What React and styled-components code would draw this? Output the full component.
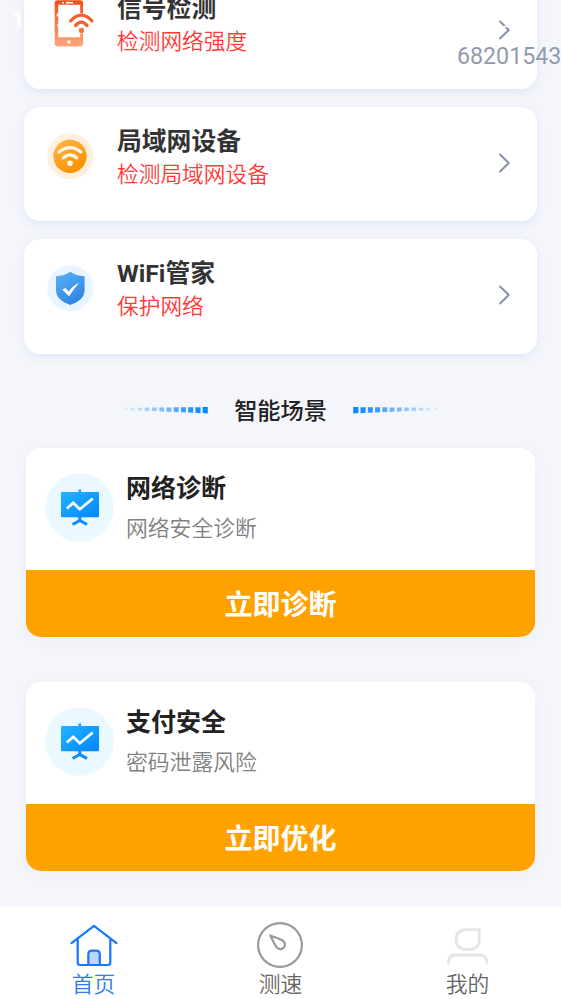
import React from "react";
import styled, { createGlobalStyle } from "styled-components";

const GlobalStyle = createGlobalStyle`
  * { box-sizing: border-box; }
  html, body { margin: 0; height: 999px; overflow: hidden; background: #f5f6fb; }
  body { font-family: Roboto, "Noto Sans CJK SC", sans-serif; }
  svg { display: block; flex: none; }
`;

const Screen = styled.div`
  position: relative;
  width: 561px;
  height: 999px;
  overflow: hidden;
  display: flex;
  flex-direction: column;
  background: #f5f6fb;
`;

const Content = styled.main`
  flex: 1;
  min-height: 0;
  overflow: hidden;
  display: flex;
  flex-direction: column;
  justify-content: flex-end;
  padding-bottom: 36px;
`;

const ToolList = styled.section`
  display: flex;
  flex-direction: column;
  gap: 18px;
  padding: 0 24.5px 0 24px;
`;

const ToolCard = styled.article`
  display: flex;
  align-items: flex-start;
  height: 114.7px;
  padding: 18px 25.5px 0 22.5px;
  border-radius: 16px;
  background: #fff;
  box-shadow: 0 3px 9px rgba(188, 209, 245, 0.42);
`;

const ToolIcon = styled.div`
  width: 70.5px;
  padding-top: 8px;
`;

const ToolText = styled.div`
  flex: 1;
`;

const ToolTitle = styled.h2`
  margin: 0;
  font-size: 24.8px;
  line-height: 34px;
  font-weight: 700;
  color: #333;
`;

const ToolNote = styled.p`
  margin: 0;
  font-size: 21.7px;
  line-height: 32.4px;
  font-weight: 350;
  color: #ff3a36;
`;

const Chevron = styled.svg`
  margin-top: 28px;
`;

const SectionHead = styled.header`
  display: flex;
  align-items: center;
  justify-content: center;
  gap: 26px;
  height: 40px;
  margin: 37px 0 17px;
`;

const SectionTitle = styled.h3`
  margin: 0;
  font-size: 23.2px;
  line-height: 40px;
  font-weight: 500;
  color: #222;
`;

const SceneList = styled.section`
  display: flex;
  flex-direction: column;
  gap: 45px;
  padding: 0 26px;
`;

const SceneCard = styled.article`
  height: 189px;
  border-radius: 15px;
  overflow: hidden;
  background: #fff;
  box-shadow: 0 3px 16px rgba(60, 60, 90, 0.045);
`;

const SceneInfo = styled.div`
  display: flex;
  height: 122px;
  gap: 12px;
  padding: 25px 19px 0;
`;

const SceneTitle = styled.h4`
  margin: -3px 0 4px;
  font-size: 25px;
  line-height: 37px;
  font-weight: 700;
  color: #222;
`;

const SceneNote = styled.p`
  margin: 0;
  font-size: 21.8px;
  line-height: 36px;
  font-weight: 350;
  color: #808080;
`;

const SceneButton = styled.button`
  display: block;
  width: 100%;
  height: 67px;
  padding: 5px 0 0;
  border: 0;
  background: #ffa200;
  color: #fff;
  font: 700 28px/62px Roboto, "Noto Sans CJK SC", sans-serif;
`;

const TabBar = styled.nav`
  display: grid;
  grid-template-columns: repeat(3, 1fr);
  height: 92px;
  background: #fff;
`;

const Tab = styled.a`
  display: flex;
  flex-direction: column;
  align-items: center;
  padding-top: 14px;
  font-size: 21.8px;
  line-height: 36px;
  font-weight: 350;
  color: ${(p) => (p.$active ? "#3478f6" : "#666")};
`;

const Watermark = styled.span`
  position: absolute;
  left: 457px;
  top: 40px;
  font-size: 23.2px;
  line-height: 32px;
  color: #929bad;
`;

const Clock = styled.span`
  position: absolute;
  left: 12px;
  top: 5px;
  font-size: 22px;
  line-height: 30px;
  font-weight: 500;
  color: #fff;
`;

const PhoneSignalIcon = () => (
  <svg width="48" height="48" viewBox="0 0 48 48">
    <defs>
      <linearGradient id="phone" x1="0" y1="0" x2="0" y2="1">
        <stop offset="0" stopColor="#f24a18" />
        <stop offset="1" stopColor="#ffa67d" />
      </linearGradient>
    </defs>
    <path
      fill="url(#phone)"
      fillRule="evenodd"
      d="M10.5 .2H33.5Q36 .2 36 3V43.5Q36 46.5 33 46.5H10.5Q7.7 46.5 7.7 43.5V3Q7.7 .2 10.5 .2ZM11.2 4.8V37.2H33.2V4.8Z"
    />
    <path d="M15 2.7H17M18.8 2.7H26" stroke="#fff" strokeWidth="1.5" />
    <rect x="20.4" y="40.5" width="3" height="3" fill="#fff" />
    <rect x="32.8" y="13.5" width="4.5" height="20" fill="#fff" />
    <path d="M9.8 13.5h2v3h-2zM10.3 24h1.5v2.4h-1.5z" fill="#fff" />
    <g fill="none" stroke="#f4602d" strokeWidth="3.3" strokeLinecap="round">
      <path d="M23.7 20.8Q34.3 9.6 44.9 20.8" />
      <path d="M28.6 25.6Q34.3 18.8 40.1 25.6" />
    </g>
    <circle cx="34.4" cy="30.4" r="2.7" fill="#f9743f" />
  </svg>
);

const LanIcon = () => (
  <svg width="47" height="47" viewBox="0 0 47 47">
    <defs>
      <linearGradient id="lan" x1="0" y1="0" x2=".6" y2="1">
        <stop offset="0" stopColor="#ffb84a" />
        <stop offset="1" stopColor="#fb9100" />
      </linearGradient>
    </defs>
    <circle cx="23.3" cy="23.3" r="23" fill="#ffefdc" />
    <circle cx="23" cy="23.3" r="16.6" fill="url(#lan)" />
    <g fill="none" stroke="#fff8ec" strokeWidth="3.2" strokeLinecap="round">
      <path d="M12 19Q23 10.2 34 19" />
      <path d="M16.3 24.8Q23 18.8 29.7 24.8" />
    </g>
    <circle cx="23" cy="30.2" r="2.8" fill="#fff8ec" />
  </svg>
);

const ShieldIcon = () => (
  <svg width="47" height="47" viewBox="0 0 47 47">
    <defs>
      <linearGradient id="shield" x1="0" y1="0" x2=".5" y2="1">
        <stop offset="0" stopColor="#5ab2fb" />
        <stop offset="1" stopColor="#3186df" />
      </linearGradient>
    </defs>
    <circle cx="23.3" cy="23.2" r="23" fill="#e8f4ff" />
    <path
      d="M23.3 6.8Q29 11 37.6 11.2V25Q37.6 35 23.3 39.9Q9 35 9 25V11.2Q17.6 11 23.3 6.8Z"
      fill="url(#shield)"
    />
    <path d="M15.3 24.8 18.4 23 21.8 26.5Q26 20.3 32.2 17.8Q27 23.5 22 31.3Z" fill="#fff" />
  </svg>
);

const BoardIcon = () => (
  <svg width="69" height="69" viewBox="0 0 69 69">
    <defs>
      <linearGradient id="board" x1="0" y1="0" x2="1" y2="1">
        <stop offset="0" stopColor="#20b5ff" />
        <stop offset="1" stopColor="#0584ff" />
      </linearGradient>
    </defs>
    <circle cx="34.5" cy="34.5" r="34.3" fill="#e9f9ff" />
    <path d="M34.8 16.5V20" stroke="#159cff" strokeWidth="2.6" />
    <rect x="16" y="19" width="38" height="25.3" rx="1" fill="url(#board)" />
    <path d="M34.8 44V47.5M27.6 51.5 34.8 47.4 42 51.5" fill="none" stroke="#0b8bff" strokeWidth="3" />
    <path d="M21.8 35.5 28.2 29.9 34.8 36.3 47.8 25.5" fill="none" stroke="#fff" strokeWidth="2.7" />
  </svg>
);

const trailOpacity = [0.1, 0.18, 0.26, 0.35, 0.43, 0.52, 0.6, 0.7, 0.8, 0.88, 0.96, 1];

const DotTrail = ({ flip }) => (
  <svg width="86" height="8" viewBox="0 0 86 8">
    <g transform={flip ? "translate(86 0) scale(-1 1)" : undefined}>
      {trailOpacity.map((opacity, i) => {
        const w = 4.3 + i * 0.08;
        const h = 2.4 + i * 0.36;
        const x = i * 7.22 + 1.2;
        const y = 0.1 + (11 - i) * 0.06;
        return (
          <path
            key={i}
            d={`M${x} ${y}h${w}v${h}l${-w} -.4z`}
            fill="#0c88ff"
            opacity={opacity}
          />
        );
      })}
    </g>
  </svg>
);

const HomeIcon = () => (
  <svg width="48" height="46" viewBox="0 0 48 46" fill="none" stroke="#1677ff" strokeWidth="2.2" strokeLinecap="round" strokeLinejoin="round">
    <path d="M1.5 22.2 24 4.8 46.4 22.2M7.7 18V41.5Q7.7 44 10.2 44H37.8Q40.3 44 40.3 41.5V18" />
    <path d="M18.3 44V33.4Q18.3 29.6 22 29.6H26Q29.8 29.6 29.8 33.4V44Z" fill="#bdd5ff" />
  </svg>
);

const SpeedIcon = () => (
  <svg width="49" height="46" viewBox="0 0 49 46" overflow="visible" fill="none" stroke="#999" strokeWidth="2.2" strokeLinejoin="round">
    <circle cx="24" cy="24" r="21.9" />
    <path d="M14.3 14.5 25.5 18.7Q29.8 21 28.7 25.2Q26.5 29.2 22.4 27.6Q20.5 26.7 19.4 24.5Z" />
  </svg>
);

const UserIcon = () => (
  <svg width="48" height="46" viewBox="0 0 48 46" fill="none" stroke="#e5e5e5" strokeWidth="2.8" strokeLinecap="round">
    <path d="M23.5 8.6H35.2V18.9Q35.2 28.7 23.7 28.7Q12 28.7 12 18.6Q12 8.6 23.5 8.6Z" />
    <path d="M4.5 41.6Q4.5 34 12 34H35.4Q42.8 34 42.8 41.6" />
  </svg>
);

const tools = [
  { title: "信号检测", note: "检测网络强度", Icon: PhoneSignalIcon, notched: true },
  { title: "局域网设备", note: "检测局域网设备", Icon: LanIcon },
  { title: "WiFi管家", note: "保护网络", Icon: ShieldIcon },
];

const scenes = [
  { title: "网络诊断", note: "网络安全诊断", action: "立即诊断" },
  { title: "支付安全", note: "密码泄露风险", action: "立即优化" },
];

const tabs = [
  { label: "首页", Icon: HomeIcon, active: true },
  { label: "测速", Icon: SpeedIcon },
  { label: "我的", Icon: UserIcon },
];

export default function App() {
  return (
    <Screen>
      <GlobalStyle />
      <Content>
        <ToolList>
          {tools.map(({ title, note, Icon, notched }) => (
            <ToolCard key={title}>
              <ToolIcon><Icon /></ToolIcon>
              <ToolText>
                <ToolTitle>{title}</ToolTitle>
                <ToolNote>{note}</ToolNote>
              </ToolText>
              <Chevron width="13" height="20" viewBox="0 0 13 20" fill="none" stroke="#8792aa" strokeWidth="2">
                <path d="M1.5 1 10.7 10 1.5 19" />
                {notched && <path d="M5.6 7.5 9.2 5.8" stroke="#fff" strokeWidth="1.8" />}
              </Chevron>
            </ToolCard>
          ))}
        </ToolList>
        <SectionHead>
          <DotTrail />
          <SectionTitle>智能场景</SectionTitle>
          <DotTrail flip />
        </SectionHead>
        <SceneList>
          {scenes.map(({ title, note, action }) => (
            <SceneCard key={title}>
              <SceneInfo>
                <BoardIcon />
                <div>
                  <SceneTitle>{title}</SceneTitle>
                  <SceneNote>{note}</SceneNote>
                </div>
              </SceneInfo>
              <SceneButton>{action}</SceneButton>
            </SceneCard>
          ))}
        </SceneList>
      </Content>
      <TabBar>
        {tabs.map(({ label, Icon, active }) => (
          <Tab key={label} $active={active}>
            <Icon />
            {label}
          </Tab>
        ))}
      </TabBar>
      <Clock>1</Clock>
      <Watermark>68201543</Watermark>
    </Screen>
  );
}
